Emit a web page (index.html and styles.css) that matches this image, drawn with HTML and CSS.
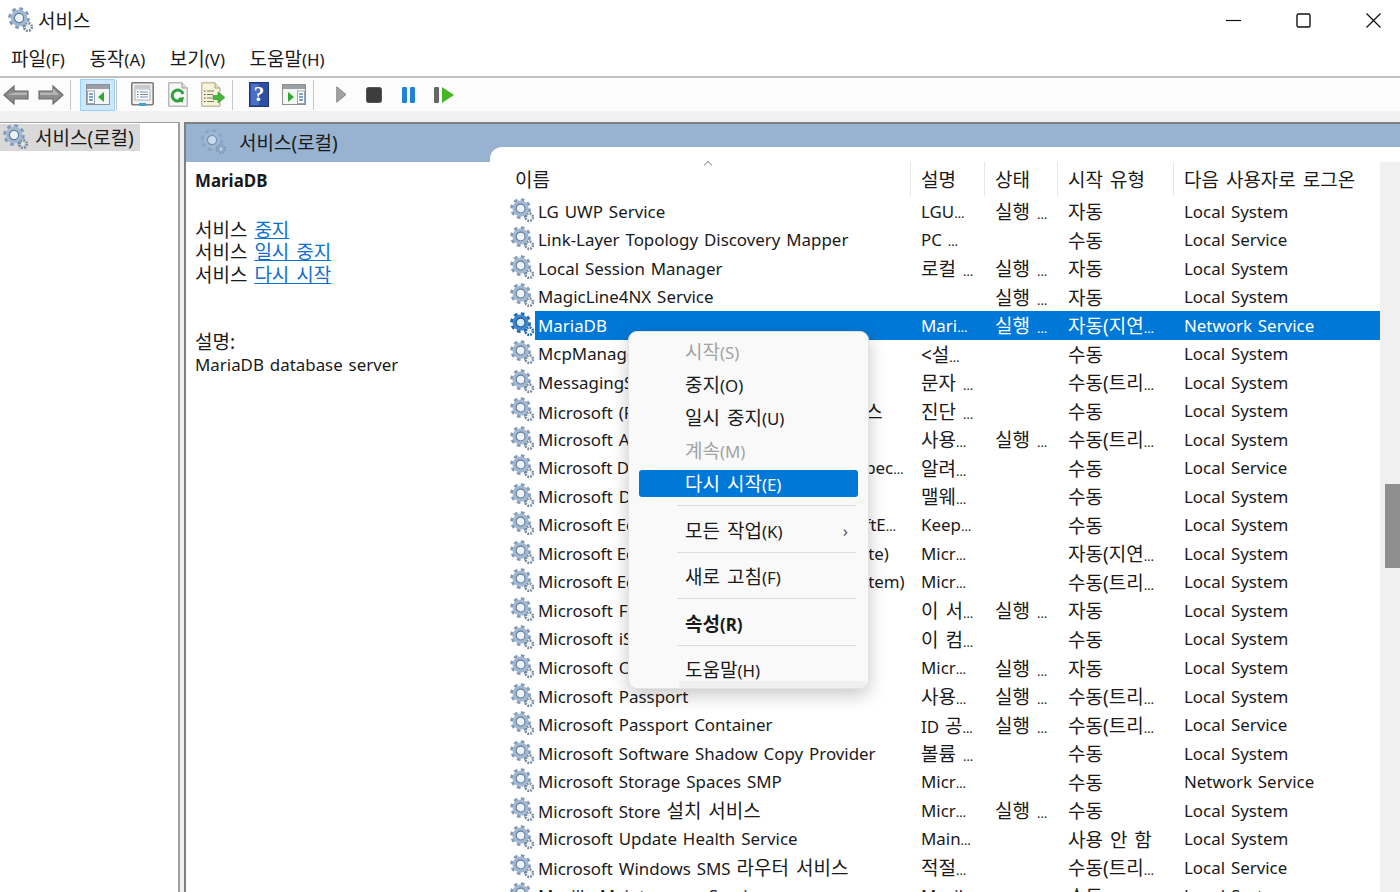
FILE: index.html
```html
<!DOCTYPE html>
<html lang="ko">
<head>
    <meta charset="UTF-8">
    <title>서비스</title>
    <link rel="stylesheet" href="styles.css">
</head>
<body>
    <svg class="defs" width="0" height="0">
        <symbol id="gear" viewBox="0 0 26 26">
            <circle cx="11" cy="11" r="9" fill="none" stroke="#7f99b8" stroke-width="3.6" stroke-dasharray="3.6 3.47"/>
            <circle cx="11" cy="11" r="6.6" fill="none" stroke="#a3b9d2" stroke-width="3.6"/>
            <circle cx="11" cy="11" r="4.6" fill="#eef4fa" stroke="#5f7e9f" stroke-width="1.2"/>
            <circle cx="20" cy="20" r="3.8" fill="none" stroke="#76899c" stroke-width="2.6" stroke-dasharray="1.8 1.18"/>
            <circle cx="20" cy="20" r="1.2" fill="#e4ebf2"/>
        </symbol>
        <symbol id="gear-on" viewBox="0 0 26 26">
            <circle cx="11" cy="11" r="9" fill="none" stroke="#1f67ad" stroke-width="3.6" stroke-dasharray="3.6 3.47"/>
            <circle cx="11" cy="11" r="6.6" fill="none" stroke="#3c87cf" stroke-width="3.6"/>
            <circle cx="11" cy="11" r="4.6" fill="#d8ebfb" stroke="#14568f" stroke-width="1.2"/>
            <circle cx="20" cy="20" r="3.8" fill="none" stroke="#1f67ad" stroke-width="2.6" stroke-dasharray="1.8 1.18"/>
            <circle cx="20" cy="20" r="1.2" fill="#d8ebfb"/>
        </symbol>
    </svg>

    <div class="titlebar">
        <svg class="gear-icon"><use href="#gear"/></svg>
        <span class="title ko">서비스</span>
        <div class="win-controls">
            <svg width="15" height="15" viewBox="0 0 15 15"><path d="M0 7.5H15" stroke="#111" stroke-width="1.2"/></svg>
            <svg width="15" height="15" viewBox="0 0 15 15"><rect x="1" y="1" width="13" height="13" rx="1.5" fill="none" stroke="#111" stroke-width="1.4"/></svg>
            <svg width="15" height="15" viewBox="0 0 15 15"><path d="M0.5 0.5L14.5 14.5M14.5 0.5L0.5 14.5" stroke="#111" stroke-width="1.3"/></svg>
        </div>
    </div>

    <div class="menubar">
        <span><span class="ko">파일</span>(F)</span>
        <span><span class="ko">동작</span>(A)</span>
        <span><span class="ko">보기</span>(V)</span>
        <span><span class="ko">도움말</span>(H)</span>
    </div>

    <div class="toolbar">
        <div class="tool">
            <svg width="26" height="22" viewBox="0 0 26 22"><path d="M1 11L11 2V7H25V15H11V20Z" fill="#8d8d8d" stroke="#6b6b6b" stroke-width="1.2"/><path d="M11 8.5H24V11H5Z" fill="#b4b4b4"/></svg>
        </div>
        <div class="tool">
            <svg width="26" height="22" viewBox="0 0 26 22"><path d="M25 11L15 2V7H1V15H15V20Z" fill="#8d8d8d" stroke="#6b6b6b" stroke-width="1.2"/><path d="M2 8.5H15V4.5L21 11H2Z" fill="#b4b4b4"/></svg>
        </div>
        <div class="sep"></div>
        <div class="tool tool-active">
            <svg width="24" height="21" viewBox="0 0 24 21"><rect x="0.5" y="0.5" width="23" height="20" fill="#f4f6f4" stroke="#8b8f93"/><rect x="1" y="1" width="22" height="4" fill="#9aa0a6"/><rect x="1.5" y="7" width="7" height="12.5" fill="#fff" stroke="#9aa6b2"/><path d="M3 10H7M3 13H7M3 16H7" stroke="#4a86c5" stroke-width="1.4"/><path d="M18 8V18L12 13Z" fill="#2fa832"/></svg>
        </div>
        <div class="sep"></div>
        <div class="tool">
            <svg width="23" height="25" viewBox="0 0 23 25"><rect x="0.8" y="0.8" width="21.4" height="22" rx="1" fill="#f1f1f1" stroke="#7d7d7d" stroke-width="1.6"/><rect x="3.5" y="3" width="16" height="3" fill="#c4c9ce"/><rect x="4" y="7" width="15" height="11" fill="#fff" stroke="#a8b0b8"/><path d="M9 10H17M9 12.5H17M9 15H17" stroke="#7a8aa0"/><path d="M6 10H7.5M6 12.5H7.5M6 15H7.5" stroke="#3a7cc0"/><rect x="8" y="21" width="7" height="3" fill="#35a3e0"/></svg>
        </div>
        <div class="tool">
            <svg width="20" height="25" viewBox="0 0 20 25"><path d="M0.8 0.8H14L19.2 6V24.2H0.8Z" fill="#f6f6f6" stroke="#9a9a9a"/><path d="M14 0.8V6H19.2" fill="#ddd" stroke="#9a9a9a"/><path d="M15 12A5.5 5.5 0 1 0 13.5 17.5" fill="none" stroke="#2fa03a" stroke-width="3"/><path d="M10 16L16 15L14.5 21Z" fill="#2fa03a"/></svg>
        </div>
        <div class="tool">
            <svg width="24" height="25" viewBox="0 0 24 25"><path d="M0.8 0.8H14L19 6V24.2H0.8Z" fill="#f7f2d8" stroke="#a8a486"/><path d="M14 0.8V6H19" fill="#e8e2c0" stroke="#a8a486"/><path d="M6 9H13M6 12.5H12M6 16H11M6 19.5H13" stroke="#7a7a60"/><path d="M3 9H4.5M3 12.5H4.5M3 16H4.5M3 19.5H4.5" stroke="#4a4a4a"/><path d="M12 13.5H17V10L24 15.5L17 21V17.5H12Z" fill="#45b53f" stroke="#2f8f2b" stroke-width="0.6"/></svg>
        </div>
        <div class="sep"></div>
        <div class="tool">
            <svg width="20" height="25" viewBox="0 0 20 25"><rect x="0.5" y="0.5" width="19" height="24" fill="#2d4fa6" stroke="#1d3478"/><rect x="2" y="2" width="8" height="21" fill="#4a6fc4"/><text class="help-mark" x="10" y="19">?</text></svg>
        </div>
        <div class="tool">
            <svg width="24" height="21" viewBox="0 0 24 21"><rect x="0.5" y="0.5" width="23" height="20" fill="#f4f6f4" stroke="#8b8f93"/><rect x="1" y="1" width="22" height="4" fill="#9aa0a6"/><rect x="15.5" y="7" width="7" height="12.5" fill="#fff" stroke="#9aa6b2"/><path d="M17 10H21M17 13H21M17 16H21" stroke="#4a86c5" stroke-width="1.4"/><path d="M6 8V18L12 13Z" fill="#2fa832"/></svg>
        </div>
        <div class="sep"></div>
        <div class="tool tool-play">
            <svg width="11" height="17" viewBox="0 0 11 17"><path d="M0.8 0.8L10 8.5L0.8 16.2Z" fill="#a2a2a2" stroke="#858585"/></svg>
        </div>
        <div class="tool tool-small">
            <svg width="16" height="16" viewBox="0 0 16 16"><rect x="0.5" y="0.5" width="15" height="15" rx="2" fill="#3c3c3c" stroke="#555"/></svg>
        </div>
        <div class="tool tool-small">
            <svg width="13" height="16" viewBox="0 0 13 16"><rect x="0" y="0" width="5" height="16" rx="1.2" fill="#1f82d6"/><rect x="8" y="0" width="5" height="16" rx="1.2" fill="#1f82d6"/></svg>
        </div>
        <div class="tool tool-small tool-resume">
            <svg width="20" height="16" viewBox="0 0 20 16"><rect x="0" y="0" width="5" height="16" rx="1.2" fill="#666"/><path d="M8 0L20 8L8 16Z" fill="#45b824"/></svg>
        </div>
    </div>

    <div class="main">
        <div class="tree">
            <div class="tree-item">
                <svg class="gear-icon"><use href="#gear"/></svg>
                <span class="ko">서비스(로컬)</span>
            </div>
        </div>

        <div class="pane">
            <div class="pane-header">
                <svg class="gear-icon pale"><use href="#gear"/></svg>
                <span class="ko">서비스(로컬)</span>
            </div>
            <div class="pane-body">
                <div class="detail">
                    <div class="detail-name">MariaDB</div>
                    <div class="detail-links ko">
                        <div>서비스 <a href="#">중지</a></div>
                        <div>서비스 <a href="#">일시 중지</a></div>
                        <div>서비스 <a href="#">다시 시작</a></div>
                    </div>
                    <div class="detail-desc">
                        <div class="ko">설명:</div>
                        <div>MariaDB database server</div>
                    </div>
                </div>

                <div class="list">
                    <div class="list-head ko">
                        <span class="sort-mark"></span>
                        <div class="c-name">이름</div>
                        <div class="c-desc">설명</div>
                        <div class="c-status">상태</div>
                        <div class="c-start">시작 유형</div>
                        <div class="c-logon">다음 사용자로 로그온</div>
                    </div>
                    <div class="rows">
                        <div class="row"><svg class="gear-icon"><use href="#gear"/></svg><div class="cells"><div class="c-name">LG UWP Service</div><div class="c-desc">LGU<i>…</i></div><div class="c-status">실행 <i>…</i></div><div class="c-start">자동</div><div class="c-logon">Local System</div></div></div>
                        <div class="row"><svg class="gear-icon"><use href="#gear"/></svg><div class="cells"><div class="c-name">Link-Layer Topology Discovery Mapper</div><div class="c-desc">PC <i>…</i></div><div class="c-status"></div><div class="c-start">수동</div><div class="c-logon">Local Service</div></div></div>
                        <div class="row"><svg class="gear-icon"><use href="#gear"/></svg><div class="cells"><div class="c-name">Local Session Manager</div><div class="c-desc ko">로컬 <i>…</i></div><div class="c-status">실행 <i>…</i></div><div class="c-start">자동</div><div class="c-logon">Local System</div></div></div>
                        <div class="row"><svg class="gear-icon"><use href="#gear"/></svg><div class="cells"><div class="c-name">MagicLine4NX Service</div><div class="c-desc"></div><div class="c-status">실행 <i>…</i></div><div class="c-start">자동</div><div class="c-logon">Local System</div></div></div>
                        <div class="row selected"><svg class="gear-icon"><use href="#gear-on"/></svg><div class="cells"><div class="c-name">MariaDB</div><div class="c-desc">Mari<i>…</i></div><div class="c-status">실행 <i>…</i></div><div class="c-start">자동(지연<i>…</i></div><div class="c-logon">Network Service</div></div></div>
                        <div class="row"><svg class="gear-icon"><use href="#gear"/></svg><div class="cells"><div class="c-name">McpManagementService</div><div class="c-desc ko">&lt;설<i>…</i></div><div class="c-status"></div><div class="c-start">수동</div><div class="c-logon">Local System</div></div></div>
                        <div class="row"><svg class="gear-icon"><use href="#gear"/></svg><div class="cells"><div class="c-name">MessagingService_4f2a1</div><div class="c-desc ko">문자 <i>…</i></div><div class="c-status"></div><div class="c-start">수동(트리<i>…</i></div><div class="c-logon">Local System</div></div></div>
                        <div class="row"><svg class="gear-icon"><use href="#gear"/></svg><div class="cells"><div class="c-name">Microsoft (R) <span class="ko">진단 허브 표준 수집기 서비스</span></div><div class="c-desc ko">진단 <i>…</i></div><div class="c-status"></div><div class="c-start">수동</div><div class="c-logon">Local System</div></div></div>
                        <div class="row"><svg class="gear-icon"><use href="#gear"/></svg><div class="cells"><div class="c-name">Microsoft Account Sign-in Assistant</div><div class="c-desc ko">사용<i>…</i></div><div class="c-status">실행 <i>…</i></div><div class="c-start">수동(트리<i>…</i></div><div class="c-logon">Local System</div></div></div>
                        <div class="row"><svg class="gear-icon"><use href="#gear"/></svg><div class="cells"><div class="c-name long">Microsoft Defender Antivirus Network Inspec<i>…</i></div><div class="c-desc ko">알려<i>…</i></div><div class="c-status"></div><div class="c-start">수동</div><div class="c-logon">Local Service</div></div></div>
                        <div class="row"><svg class="gear-icon"><use href="#gear"/></svg><div class="cells"><div class="c-name">Microsoft Defender Antivirus Service</div><div class="c-desc ko">맬웨<i>…</i></div><div class="c-status"></div><div class="c-start">수동</div><div class="c-logon">Local System</div></div></div>
                        <div class="row"><svg class="gear-icon"><use href="#gear"/></svg><div class="cells"><div class="c-name long">Microsoft Edge Elevation Service (MicrosoftE<i>…</i></div><div class="c-desc">Keep<i>…</i></div><div class="c-status"></div><div class="c-start">수동</div><div class="c-logon">Local System</div></div></div>
                        <div class="row"><svg class="gear-icon"><use href="#gear"/></svg><div class="cells"><div class="c-name long">Microsoft Edge Update Service (edgeupdate)</div><div class="c-desc">Micr<i>…</i></div><div class="c-status"></div><div class="c-start">자동(지연<i>…</i></div><div class="c-logon">Local System</div></div></div>
                        <div class="row"><svg class="gear-icon"><use href="#gear"/></svg><div class="cells"><div class="c-name long">Microsoft Edge Update Service (edgeupdatem)</div><div class="c-desc">Micr<i>…</i></div><div class="c-status"></div><div class="c-start">수동(트리<i>…</i></div><div class="c-logon">Local System</div></div></div>
                        <div class="row"><svg class="gear-icon"><use href="#gear"/></svg><div class="cells"><div class="c-name">Microsoft FTP Service</div><div class="c-desc ko">이 서<i>…</i></div><div class="c-status">실행 <i>…</i></div><div class="c-start">자동</div><div class="c-logon">Local System</div></div></div>
                        <div class="row"><svg class="gear-icon"><use href="#gear"/></svg><div class="cells"><div class="c-name">Microsoft iSCSI Initiator Service</div><div class="c-desc ko">이 컴<i>…</i></div><div class="c-status"></div><div class="c-start">수동</div><div class="c-logon">Local System</div></div></div>
                        <div class="row"><svg class="gear-icon"><use href="#gear"/></svg><div class="cells"><div class="c-name">Microsoft Office Click-to-Run</div><div class="c-desc">Micr<i>…</i></div><div class="c-status">실행 <i>…</i></div><div class="c-start">자동</div><div class="c-logon">Local System</div></div></div>
                        <div class="row"><svg class="gear-icon"><use href="#gear"/></svg><div class="cells"><div class="c-name">Microsoft Passport</div><div class="c-desc ko">사용<i>…</i></div><div class="c-status">실행 <i>…</i></div><div class="c-start">수동(트리<i>…</i></div><div class="c-logon">Local System</div></div></div>
                        <div class="row"><svg class="gear-icon"><use href="#gear"/></svg><div class="cells"><div class="c-name">Microsoft Passport Container</div><div class="c-desc">ID <span class="ko">공<i>…</i></span></div><div class="c-status">실행 <i>…</i></div><div class="c-start">수동(트리<i>…</i></div><div class="c-logon">Local Service</div></div></div>
                        <div class="row"><svg class="gear-icon"><use href="#gear"/></svg><div class="cells"><div class="c-name">Microsoft Software Shadow Copy Provider</div><div class="c-desc ko">볼륨 <i>…</i></div><div class="c-status"></div><div class="c-start">수동</div><div class="c-logon">Local System</div></div></div>
                        <div class="row"><svg class="gear-icon"><use href="#gear"/></svg><div class="cells"><div class="c-name">Microsoft Storage Spaces SMP</div><div class="c-desc">Micr<i>…</i></div><div class="c-status"></div><div class="c-start">수동</div><div class="c-logon">Network Service</div></div></div>
                        <div class="row"><svg class="gear-icon"><use href="#gear"/></svg><div class="cells"><div class="c-name">Microsoft Store <span class="ko">설치 서비스</span></div><div class="c-desc">Micr<i>…</i></div><div class="c-status">실행 <i>…</i></div><div class="c-start">수동</div><div class="c-logon">Local System</div></div></div>
                        <div class="row"><svg class="gear-icon"><use href="#gear"/></svg><div class="cells"><div class="c-name">Microsoft Update Health Service</div><div class="c-desc">Main<i>…</i></div><div class="c-status"></div><div class="c-start">사용 안 함</div><div class="c-logon">Local System</div></div></div>
                        <div class="row"><svg class="gear-icon"><use href="#gear"/></svg><div class="cells"><div class="c-name">Microsoft Windows SMS <span class="ko">라우터 서비스</span></div><div class="c-desc ko">적절<i>…</i></div><div class="c-status"></div><div class="c-start">수동(트리<i>…</i></div><div class="c-logon">Local Service</div></div></div>
                        <div class="row"><svg class="gear-icon"><use href="#gear"/></svg><div class="cells"><div class="c-name">Mozilla Maintenance Service</div><div class="c-desc">Mozil<i>…</i></div><div class="c-status"></div><div class="c-start">수동</div><div class="c-logon">Local System</div></div></div>
                    </div>
                    <div class="scrollbar"><div class="scroll-thumb"></div></div>
                </div>
            </div>
        </div>
    </div>

    <div class="context-menu">
        <div class="menu-item disabled"><span class="ko">시작</span>(S)</div>
        <div class="menu-item"><span class="ko">중지</span>(O)</div>
        <div class="menu-item"><span class="ko">일시 중지</span>(U)</div>
        <div class="menu-item disabled"><span class="ko">계속</span>(M)</div>
        <div class="menu-item active"><span class="ko">다시 시작</span>(E)</div>
        <div class="menu-sep"></div>
        <div class="menu-item"><span class="ko">모든 작업</span>(K)<span class="chevron">›</span></div>
        <div class="menu-sep"></div>
        <div class="menu-item"><span class="ko">새로 고침</span>(F)</div>
        <div class="menu-sep"></div>
        <div class="menu-item bold"><span class="ko">속성</span>(R)</div>
        <div class="menu-sep"></div>
        <div class="menu-item"><span class="ko">도움말</span>(H)</div>
        <div class="menu-strip"></div>
    </div>
</body>
</html>
```

FILE: styles.css
```css
* {
    margin: 0;
    padding: 0;
    box-sizing: border-box;
}

body {
    font-family: "Noto Sans", "Noto Sans CJK KR", sans-serif;
    font-size: 16.9px;
    word-spacing: 1.5px;
    color: #1a1a1a;
    background: #fff;
    width: 1400px;
    height: 892px;
    overflow: hidden;
    display: flex;
    flex-direction: column;
    position: relative;
}

/* hangul runs wider than latin in the original font */
.ko,
.c-status,
.c-start {
    font-size: 19px;
    word-spacing: 2px;
}

/* truncation dots are small in the original */
i {
    font-style: normal;
    font-size: 13px;
}

.defs {
    position: absolute;
}

.gear-icon {
    width: 26px;
    height: 26px;
    flex: none;
}

.gear-icon.pale {
    opacity: 0.6;
}

/* title bar */
.titlebar {
    height: 40px;
    display: flex;
    align-items: center;
    padding-left: 8px;
    flex: none;
}

.title {
    margin-left: 4px;
}

.win-controls {
    margin-left: auto;
    display: flex;
    gap: 55px;
    padding-right: 19px;
}

/* menu */
.menubar {
    height: 38px;
    flex: none;
    display: flex;
    align-items: center;
    gap: 24.5px;
    padding-left: 11px;
    border-bottom: 2px solid #c0c0c0;
}

/* toolbar */
.toolbar {
    height: 33px;
    flex: none;
    display: flex;
    align-items: center;
    margin-left: -2px;
    background: #fcfcfc;
}

.tool {
    width: 35px;
    height: 32px;
    flex: none;
    display: flex;
    align-items: center;
    justify-content: center;
}

.tool-active {
    background: #cce8ff;
    border: 1px solid #99d1ff;
    margin: 0 -1px 0 1px;
}

.tool-play {
    margin: 0 -2px 0 2px;
}

.tool-small {
    width: 34px;
}

.tool-resume {
    margin-left: 2px;
}

.sep {
    width: 1px;
    height: 30px;
    flex: none;
    background: #c8c8c8;
    margin: 0 8px 0 2px;
}

.help-mark {
    font-family: "Liberation Serif", serif;
    font-size: 21px;
    font-weight: bold;
    fill: #fff;
    text-anchor: middle;
}

/* main area */
.main {
    flex: 1;
    min-height: 0;
    display: flex;
    background: #f0f0f0;
    padding-top: 11px;
}

.tree {
    width: 180px;
    flex: none;
    background: #fff;
    border-top: 1px solid #a0a0a0;
    border-right: 2px solid #a0a0a0;
    padding-top: 1px;
}

.tree-item {
    width: 140px;
    height: 27px;
    display: flex;
    align-items: center;
    gap: 6px;
    padding: 0 0 2px 3px;
    background: #d9d9d9;
}

.pane {
    margin-left: 4px;
    flex: 1;
    min-width: 0;
    display: flex;
    flex-direction: column;
    border-top: 2px solid #808080;
    border-left: 2px solid #808080;
    background: #fff;
}

.pane-header {
    height: 38px;
    flex: none;
    display: flex;
    align-items: center;
    gap: 12px;
    padding: 0 0 2px 15px;
    background: #97b3d1;
}

.pane-body {
    flex: 1;
    min-height: 0;
    display: flex;
}

/* left description part */
.detail {
    width: 304px;
    flex: none;
    padding: 8px 0 0 9px;
    line-height: 22.5px;
}

.detail-name {
    font-weight: 700;
}

.detail-links {
    margin-top: 26px;
}

.detail-links a {
    color: #0f6fd0;
}

.detail-desc {
    margin-top: 45px;
}

/* service list */
.list {
    flex: 1;
    min-width: 0;
    margin-top: -15px;
    background: #fff;
    border-top-left-radius: 12px;
    position: relative;
}

.list-head {
    height: 35px;
    margin: 15px 20px 0 0;
    display: grid;
    grid-template-columns: 420px 74px 73px 116px 1fr;
    align-items: start;
    position: relative;
}

.list-head > div {
    height: 34px;
    line-height: 36px;
}

.list-head > div + div {
    border-left: 1px solid #e6e6e6;
    padding-left: 10px;
}

.list-head .c-name {
    padding-left: 25px;
}

.sort-mark {
    position: absolute;
    left: 215px;
    top: 0;
    width: 6px;
    height: 6px;
    border-left: 1px solid #999;
    border-top: 1px solid #999;
    transform: rotate(45deg);
}

.rows {
    margin-right: 20px;
    display: grid;
    grid-auto-rows: 28.53px;
}

.row {
    display: flex;
    align-items: center;
    padding-left: 20px;
}

.row .gear-icon {
    width: 25px;
    height: 25px;
    margin-top: -2px;
}

.cells {
    flex: 1;
    min-width: 0;
    height: 100%;
    display: grid;
    grid-template-columns: 375px 74px 73px 116px 1fr;
    align-items: center;
    white-space: nowrap;
}

.cells .c-name {
    padding-left: 3px;
    overflow: hidden;
}

.cells .c-name.long {
    word-spacing: 0;
    letter-spacing: -0.05px;
}

.c-desc,
.c-status,
.c-start,
.c-logon {
    padding-left: 11px;
    overflow: hidden;
}

.row.selected .cells {
    background: #0078d7;
    color: #fff;
}

.scrollbar {
    position: absolute;
    top: 15px;
    right: 0;
    bottom: 0;
    width: 20px;
    background: #f0f0f0;
}

.scroll-thumb {
    position: absolute;
    top: 322px;
    left: 5px;
    width: 15px;
    height: 84px;
    background: #8f8f8f;
}

/* right click menu */
.context-menu {
    position: absolute;
    left: 628px;
    top: 331px;
    width: 241px;
    height: 358px;
    padding-top: 3px;
    display: flex;
    flex-direction: column;
    overflow: hidden;
    background: #f9f9f9;
    border: 1px solid #e2e2e2;
    border-radius: 9px;
    box-shadow: 0 6px 18px rgba(0, 0, 0, 0.22);
}

.menu-item {
    height: 27px;
    margin: 3px 10px;
    flex: none;
    padding-left: 46px;
    line-height: 29px;
    border-radius: 3px;
    position: relative;
}

.menu-item.disabled {
    color: #a3a3a3;
}

.menu-item.active {
    background: #0078d7;
    color: #fff;
}

.menu-item.bold {
    font-weight: 700;
}

.chevron {
    position: absolute;
    right: 10px;
    top: -1px;
    color: #555;
}

.menu-sep {
    height: 1px;
    margin: 5px 12px 7.5px 48px;
    flex: none;
    background: #dcdcdc;
}

.menu-strip {
    position: absolute;
    left: 50px;
    right: 2px;
    bottom: 0;
    height: 7px;
    background: #f0f0f0;
}
```
